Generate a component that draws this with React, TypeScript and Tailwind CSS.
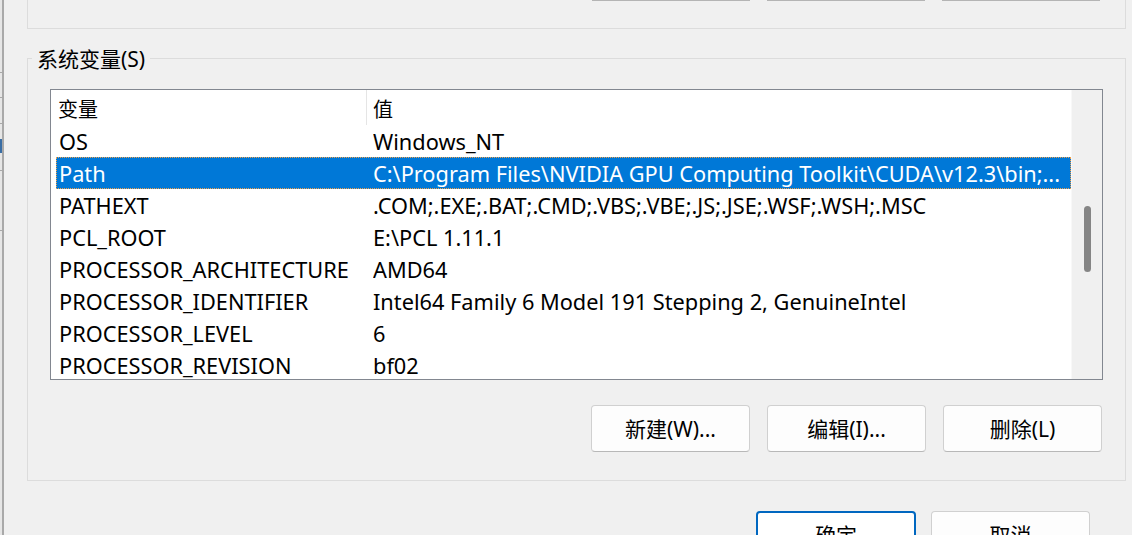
import React from 'react';

const FONT = '"Noto Sans", "Noto Sans CJK SC", sans-serif';

type Row = { name: string; value: string; selected?: boolean };

const rows: Row[] = [
  { name: 'OS', value: 'Windows_NT' },
  {
    name: 'Path',
    value: 'C:\\Program Files\\NVIDIA GPU Computing Toolkit\\CUDA\\v12.3\\bin;...',
    selected: true,
  },
  { name: 'PATHEXT', value: '.COM;.EXE;.BAT;.CMD;.VBS;.VBE;.JS;.JSE;.WSF;.WSH;.MSC' },
  { name: 'PCL_ROOT', value: 'E:\\PCL 1.11.1' },
  { name: 'PROCESSOR_ARCHITECTURE', value: 'AMD64' },
  { name: 'PROCESSOR_IDENTIFIER', value: 'Intel64 Family 6 Model 191 Stepping 2, GenuineIntel' },
  { name: 'PROCESSOR_LEVEL', value: '6' },
  { name: 'PROCESSOR_REVISION', value: 'bf02' },
];

function WinButton({ label, primary }: { label: string; primary?: boolean }) {
  return (
    <button
      type="button"
      className={
        primary
          ? 'flex h-[47px] w-[160px] items-center justify-center rounded-[4px] border-2 border-[#0067c0] bg-white pt-[2px] text-[21px] text-black'
          : 'flex h-[47px] w-[159px] items-center justify-center rounded-[4px] border border-[#d0d0d0] border-b-[#b8b8b8] bg-[#fdfdfd] pt-[2px] text-[21px] text-black'
      }
    >
      {label}
    </button>
  );
}

export default function App() {
  return (
    <div
      className="relative h-[535px] w-[1132px] overflow-hidden bg-[#f0f0f0] text-black"
      style={{ fontFamily: FONT }}
    >
      {/* edge of the window behind */}
      <div className="absolute left-0 top-0 flex h-full w-[4px]">
        <div className="relative h-full w-[2px] bg-[#e6e6e6]">
          <div className="absolute left-0 top-[72px] h-[1px] w-[2px] bg-[#a8a8a8]" />
          <div className="absolute left-0 top-[97px] h-[1px] w-[2px] bg-[#a8a8a8]" />
          <div className="absolute left-0 top-[123px] h-[1px] w-[2px] bg-[#a8a8a8]" />
          <div className="absolute left-0 top-[139px] h-[14px] w-[2px] bg-[#3a6ea5]" />
          <div className="absolute left-0 top-[170px] h-[1px] w-[2px] bg-[#a8a8a8]" />
          <div className="absolute left-0 top-[230px] h-[1px] w-[2px] bg-[#a8a8a8]" />
        </div>
        <div className="h-full w-[2px] bg-[#a9a9a9]" />
      </div>

      {/* user variables group (cut off above) */}
      <div className="ml-[27px] h-[29px] w-[1099px] border-b border-l border-r border-[#dcdcdc]">
        <div className="flex gap-[17px] pl-[564px]">
          <div className="h-[1px] w-[158px] bg-[#b4b4b4]" />
          <div className="h-[1px] w-[158px] bg-[#b4b4b4]" />
          <div className="h-[1px] w-[158px] bg-[#b4b4b4]" />
        </div>
      </div>

      {/* system variables group */}
      <div className="relative ml-[27px] mt-[29px] h-[423px] w-[1099px] border border-[#dcdcdc]">
        <div className="absolute left-[4px] top-[-12px] bg-[#f0f0f0] px-[5px] text-[21px] leading-[24px]">
          系统变量(S)
        </div>

        <div className="ml-[22px] mt-[30px] flex h-[291px] w-[1053px] overflow-hidden border border-[#828790] bg-white">
          <div className="flex w-[1020px] flex-col">
            <div className="flex h-[37px] items-center pt-[5px] text-[20px]">
              <div className="w-[315px] pl-[7px]">变量</div>
              <div className="mt-[-5px] h-[35px] w-[1px] bg-[#e5e5e5]" />
              <div className="flex-1 pl-[6px]">值</div>
            </div>
            {rows.map((r) => (
              <div
                key={r.name}
                className={
                  r.selected
                    ? 'ml-[5px] flex h-[32px] shrink-0 items-center border border-dotted border-[#f0a04a] bg-[#0078d7] pt-[1px] text-[21.75px] leading-[28px] text-white'
                    : 'ml-[5px] flex h-[32px] shrink-0 items-center border border-transparent pt-[1px] text-[21.75px] leading-[28px]'
                }
              >
                <div className="w-[316px] whitespace-nowrap pl-[2px]">{r.name}</div>
                <div className="flex-1 overflow-hidden whitespace-nowrap">{r.value}</div>
              </div>
            ))}
          </div>
          <div className="flex w-[31px] justify-center border-l border-[#f8f8f8] bg-[#f0f0f0] pt-[116px]">
            <div className="h-[66px] w-[7px] rounded-full bg-[#858585]" />
          </div>
        </div>

        <div className="ml-[563px] mt-[25px] flex gap-[17px]">
          <WinButton label="新建(W)..." />
          <WinButton label="编辑(I)..." />
          <WinButton label="删除(L)" />
        </div>
      </div>

      <div className="ml-[756px] mt-[30px] flex gap-[15px]">
        <WinButton label="确定" primary />
        <WinButton label="取消" />
      </div>
    </div>
  );
}
